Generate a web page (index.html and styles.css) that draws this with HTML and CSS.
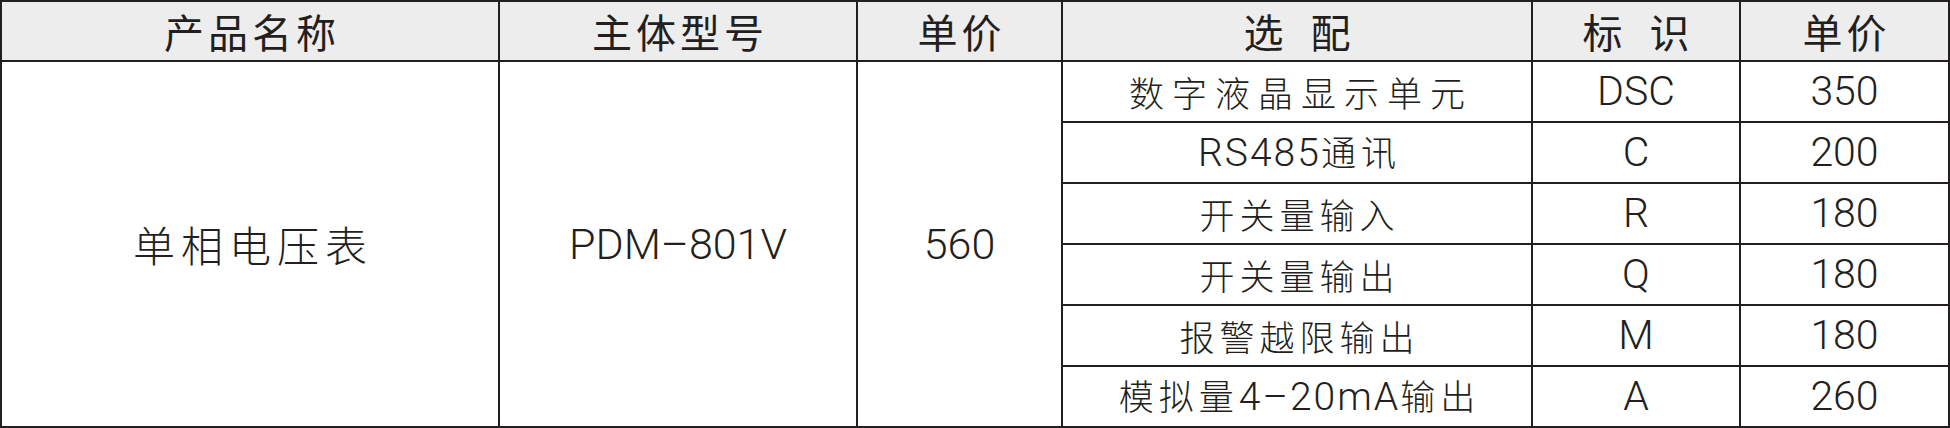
FILE: index.html
```html
<!DOCTYPE html>
<html lang="zh-CN">
<head>
<meta charset="utf-8">
<title>单相电压表 价格表</title>
<link rel="stylesheet" href="styles.css">
</head>
<body>
<div class="price-table">
  <div class="cell head"><span class="hd">产品名称</span></div>
  <div class="cell head"><span class="hd">主体型号</span></div>
  <div class="cell head"><span class="hd">单价</span></div>
  <div class="cell head"><span class="hd spaced">选 配</span></div>
  <div class="cell head"><span class="hd spaced">标 识</span></div>
  <div class="cell head"><span class="hd">单价</span></div>

  <div class="cell span-all"><span class="name">单相电压表</span></div>
  <div class="cell span-all"><span class="lat big">PDM–801V</span></div>
  <div class="cell span-all"><span class="lat big">560</span></div>

  <div class="cell"><span class="opt wide">数字液晶显示单元</span></div>
  <div class="cell"><span class="lat val">DSC</span></div>
  <div class="cell"><span class="lat val">350</span></div>

  <div class="cell"><span class="opt"><span class="lat mid">RS485</span>通讯</span></div>
  <div class="cell"><span class="lat val">C</span></div>
  <div class="cell"><span class="lat val">200</span></div>

  <div class="cell"><span class="opt">开关量输入</span></div>
  <div class="cell"><span class="lat val">R</span></div>
  <div class="cell"><span class="lat val">180</span></div>

  <div class="cell"><span class="opt">开关量输出</span></div>
  <div class="cell"><span class="lat val">Q</span></div>
  <div class="cell"><span class="lat val">180</span></div>

  <div class="cell"><span class="opt">报警越限输出</span></div>
  <div class="cell"><span class="lat val">M</span></div>
  <div class="cell"><span class="lat val">180</span></div>

  <div class="cell"><span class="opt">模拟量<span class="lat mid">4–20mA</span>输出</span></div>
  <div class="cell"><span class="lat val">A</span></div>
  <div class="cell"><span class="lat val">260</span></div>
</div>
</body>
</html>
```

FILE: styles.css
```css
html, body {
  margin: 0;
  padding: 0;
  background: #ffffff;
}

body {
  color: #231f20;
  font-family: "Noto Sans CJK SC", "Noto Sans", sans-serif;
}

.price-table {
  display: grid;
  grid-template-columns: 498px 358px 205px 470px 208px 209px;
  grid-template-rows: 60px repeat(6, 61px);
  width: 1950px;
  height: 428px;
  box-sizing: border-box;
  border-top: 2px solid #231f20;
  border-left: 2px solid #231f20;
}

.cell {
  box-sizing: border-box;
  border-right: 2px solid #231f20;
  border-bottom: 2px solid #231f20;
  display: flex;
  align-items: center;
  justify-content: center;
  white-space: nowrap;
  overflow: hidden;
}

.head {
  background: #ededed;
}

.span-all {
  grid-row: span 6;
}

.hd {
  font-family: "Noto Sans CJK SC", sans-serif;
  font-size: 40px;
  font-weight: 400;
  letter-spacing: 4px;
  margin-right: -4px;
  line-height: 1;
}

.hd.spaced {
  word-spacing: 10px;
}

.name {
  font-family: "Noto Sans CJK SC", sans-serif;
  font-size: 42px;
  font-weight: 300;
  letter-spacing: 6px;
  margin-right: -6px;
  line-height: 1;
}

.opt {
  font-family: "Noto Sans CJK SC", sans-serif;
  font-size: 35px;
  font-weight: 300;
  letter-spacing: 5px;
  margin-right: -5px;
  line-height: 1;
}

.opt.wide {
  letter-spacing: 8px;
  margin-right: -8px;
}

.lat {
  font-family: "Roboto", "Liberation Sans", sans-serif;
  font-weight: 300;
  line-height: 1;
}

.big {
  font-size: 43px;
  letter-spacing: 0;
}

.val {
  font-size: 41px;
  letter-spacing: 0;
}

.mid {
  font-size: 39px;
  letter-spacing: 2px;
}
```
